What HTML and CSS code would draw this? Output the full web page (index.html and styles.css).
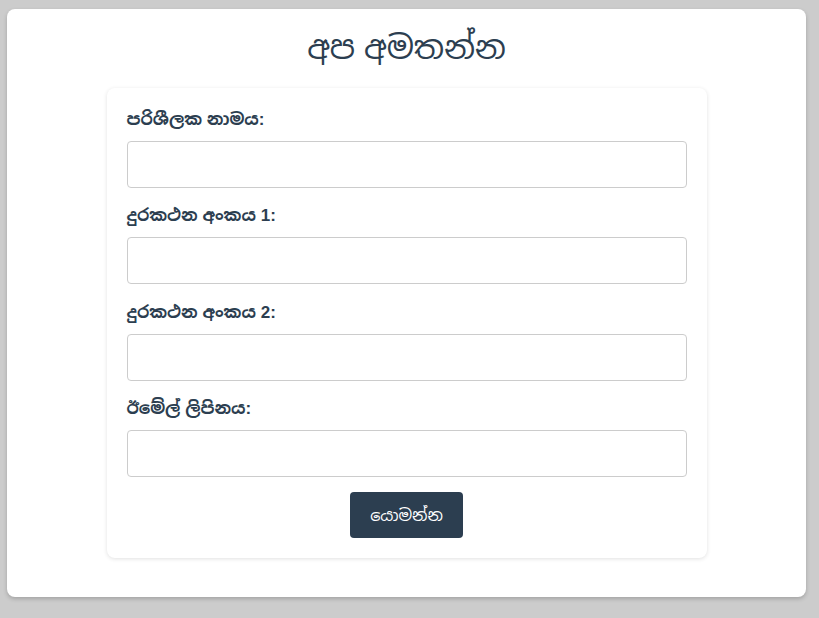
FILE: index.html
```html
<!DOCTYPE html>
<html lang="si">
<head>
<meta charset="utf-8">
<link rel="stylesheet" href="styles.css">
</head>
<body>
<div class="card">
  <h1 class="title">අප අමතන්න</h1>
  <form class="form">
    <div class="group">
      <label class="label">පරිශීලක නාමය:</label>
      <input class="input" type="text">
    </div>
    <div class="group">
      <label class="label">දුරකථන අංකය 1:</label>
      <input class="input" type="text">
    </div>
    <div class="group">
      <label class="label">දුරකථන අංකය 2:</label>
      <input class="input" type="text">
    </div>
    <div class="group last">
      <label class="label">ඊමේල් ලිපිනය:</label>
      <input class="input" type="text">
    </div>
    <div class="actions">
      <button class="button" type="button">යොමන්න</button>
    </div>
  </form>
</div>
</body>
</html>
```
FILE: styles.css
```css
html, body {
  margin: 0;
  padding: 0;
  background: #cccccc;
  font-family: "Liberation Sans", "Noto Sans Sinhala", "Noto Serif Sinhala", "LKLUG", Arial, sans-serif;
  color: #2c3e50;
}
body {
  padding: 9px 13px 21px 7px;
}
.card {
  background: #ffffff;
  border-radius: 8px;
  box-shadow: 0 2px 4px rgba(0,0,0,0.2);
  height: 588px;
  box-sizing: border-box;
  padding: 20px 0 0;
}
.title {
  margin: 0 0 20px;
  text-align: center;
  font-size: 32px;
  font-weight: normal;
  line-height: 39px;
  color: #2c3e50;
}
.form {
  width: 600px;
  margin: 0 auto;
  box-sizing: border-box;
  padding: 20px;
  border-radius: 8px;
  background: #fff;
  box-shadow: 0 1px 4px rgba(0,0,0,0.12);
  display: flex;
  flex-direction: column;
}
.group {
  display: flex;
  flex-direction: column;
  margin-bottom: 16.4px;
}
.group.last {
  margin-bottom: 15px;
}
.label {
  font-weight: bold;
  font-size: 17px;
  line-height: 23px;
  margin-bottom: 10px;
}
.input {
  height: 47px;
  box-sizing: border-box;
  border: 1px solid #cccccc;
  border-radius: 4px;
  padding: 10px;
  font-size: 16px;
  font-family: inherit;
}
.actions {
  display: flex;
  justify-content: center;
}
.button {
  background: #2c3e50;
  color: #fff;
  border: none;
  border-radius: 4px;
  height: 46px;
  padding: 0 20px;
  font-size: 16px;
  font-family: inherit;
}
```
